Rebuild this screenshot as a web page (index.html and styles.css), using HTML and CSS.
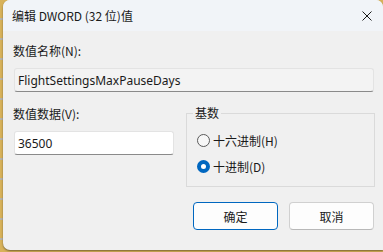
FILE: index.html
```html
<!DOCTYPE html>
<html lang="zh-CN">
<head>
    <meta charset="UTF-8">
    <title>编辑 DWORD (32 位)值</title>
    <link rel="stylesheet" href="styles.css">
</head>
<body>
    <div class="window">
        <div class="titlebar">
            <div class="title">编辑 DWORD (32 位)值</div>
            <div class="close">
                <svg viewBox="0 0 10 10" width="10" height="10">
                    <path d="M0.5 0.5L9.5 9.5M9.5 0.5L0.5 9.5" stroke="#1a1a1a" stroke-width="1" fill="none"/>
                </svg>
            </div>
        </div>
        <div class="body">
            <div class="label">数值名称(N):</div>
            <div class="field readonly">FlightSettingsMaxPauseDays</div>
            <div class="row">
                <div class="data">
                    <div class="label">数值数据(V):</div>
                    <div class="field value">36500</div>
                </div>
                <fieldset class="base">
                    <legend>基数</legend>
                    <div class="radio"><span class="dot"></span>十六进制(H)</div>
                    <div class="radio checked"><span class="dot"></span>十进制(D)</div>
                </fieldset>
            </div>
            <div class="buttons">
                <button class="btn primary">确定</button>
                <button class="btn">取消</button>
            </div>
        </div>
    </div>
</body>
</html>
```

FILE: styles.css
```css
* {
    margin: 0;
    padding: 0;
    box-sizing: border-box;
}

body {
    width: 383px;
    height: 252px;
    overflow: hidden;
    background: repeating-linear-gradient(180deg, #d8b25a 0px, #d8b25a 18px, #b9b4a8 18px, #b9b4a8 20px);
    font-family: "Segoe UI", "Noto Sans", "Noto Sans CJK SC", sans-serif;
    font-size: 12px;
    color: #1a1a1a;
}

.window {
    margin-left: 3px;
    width: 380px;
    height: 250px;
    background: #f0f0f0;
    border-radius: 7px 7px 0 7px;
    box-shadow: 0 1px 2px rgba(0, 0, 0, 0.45);
    overflow: hidden;
    display: flex;
    flex-direction: column;
}

.titlebar {
    height: 31px;
    background: #f1f4f8;
    display: flex;
    align-items: center;
    justify-content: space-between;
    padding: 0 11px 0 9px;
}

.title {
    font-family: "Noto Sans CJK SC", sans-serif;
    font-size: 12px;
    color: #1a1a1a;
}

.close {
    width: 10px;
    height: 10px;
    display: flex;
}

.body {
    padding: 12px 8px 0 10px;
    display: flex;
    flex-direction: column;
}

.label {
    font-family: "Noto Sans CJK SC", sans-serif;
    font-size: 12px;
    line-height: 16px;
    height: 16px;
}

.field {
    height: 24px;
    margin: 9px 0 0 1px;
    padding: 0 3px;
    display: flex;
    align-items: center;
    font-family: "Segoe UI", "Noto Sans", sans-serif;
    font-size: 12px;
    border: 1px solid #e3e3e3;
    border-bottom: 1px solid #8a8a8a;
    border-radius: 3px;
}

.readonly {
    background: #f3f3f3;
    margin-right: 1px;
}

.value {
    background: #ffffff;
    width: 160px;
}

.row {
    display: flex;
    margin-top: 14px;
    gap: 12px;
}

.data {
    display: flex;
    flex-direction: column;
}

.base {
    width: 189px;
    height: 81px;
    border: 1px solid #dadada;
    padding: 12px 0 0 6px;
    display: flex;
    flex-direction: column;
    gap: 10px;
}

.base legend {
    font-family: "Noto Sans CJK SC", sans-serif;
    padding: 0 2px;
    line-height: 14px;
}

.radio {
    display: flex;
    align-items: center;
    gap: 3px;
    height: 16px;
    margin-left: 4px;
    font-family: "Noto Sans CJK SC", sans-serif;
}

.dot {
    width: 13px;
    height: 13px;
    border-radius: 50%;
    border: 1px solid #5a5a5a;
    background: #f7f7f7;
}

.radio.checked .dot {
    border: 4px solid #0067c0;
    background: #ffffff;
}

.buttons {
    display: flex;
    justify-content: flex-end;
    gap: 11px;
    margin-top: 15px;
    padding-right: 1px;
}

.btn {
    width: 85px;
    height: 28px;
    background: #fdfdfd;
    border: 1px solid #d0d0d0;
    border-bottom-color: #b8b8b8;
    border-radius: 4px;
    font-family: "Noto Sans CJK SC", sans-serif;
    font-size: 12px;
    color: #1a1a1a;
}

.btn.primary {
    border: 1px solid #0067c0;
}
```
